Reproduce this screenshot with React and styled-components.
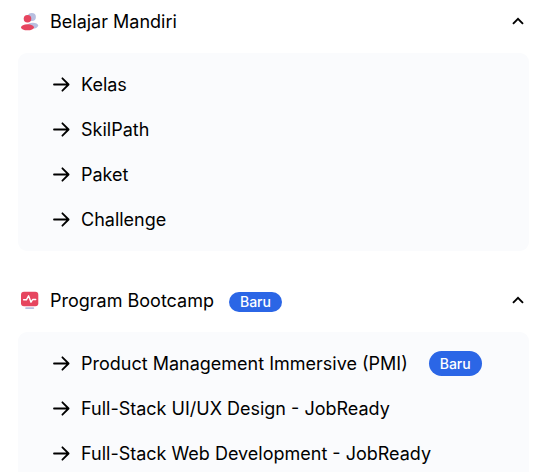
import React, { useState } from "react";
import styled, { createGlobalStyle } from "styled-components";

const GlobalStyle = createGlobalStyle`
  *, *::before, *::after { box-sizing: border-box; }
  body {
    margin: 0;
    background: #ffffff;
    color: #000000;
    font-family: Inter, "Liberation Sans", sans-serif;
    font-size: 18px;
    line-height: 27px;
  }
`;

const Menu = styled.nav`
  display: flex;
  flex-direction: column;
  gap: 28px;
  max-height: 100vh;
  overflow: hidden;
  padding: 0 8px 0 18px;
`;

const Section = styled.section`
  display: flex;
  flex-direction: column;
  flex-shrink: 0;
  gap: 11px;
`;

const SectionToggle = styled.button`
  display: flex;
  align-items: center;
  width: 100%;
  height: 42px;
  padding: 0 4px 0 2px;
  border: 0;
  background: none;
  color: inherit;
  font: inherit;
  text-align: left;
  cursor: pointer;

  & > svg { flex-shrink: 0; }
`;

const SectionTitle = styled.span`
  display: flex;
  align-items: baseline;
  margin-left: 10px;
`;

const Chevron = styled.svg`
  margin-left: auto;
  transform: ${({ $open }) => ($open ? "none" : "rotate(180deg)")};
`;

const Panel = styled.ul`
  margin: 0;
  padding: 9px 32px;
  border-radius: 9px;
  background: #fafbfd;
  list-style: none;
`;

const ItemLink = styled.a`
  display: flex;
  align-items: center;
  height: 45px;
  color: inherit;
  text-decoration: none;
  white-space: nowrap;

  & > svg { flex-shrink: 0; margin-right: 9px; }
`;

const Badge = styled.span`
  flex-shrink: 0;
  margin-left: ${({ $large }) => ($large ? "21px" : "15px")};
  padding: 0 11px;
  border-radius: 13px;
  background: #2b66e6;
  color: #ffffff;
  font-size: 14px;
  font-weight: 500;
  line-height: ${({ $large }) => ($large ? "25px" : "20px")};
`;

const PeopleIcon = () => (
  <svg width="20" height="20" viewBox="0 0 20 20" aria-hidden="true">
    <circle cx="11.8" cy="6" r="4.1" fill="#b8bfe0" />
    <ellipse cx="12.8" cy="14.6" rx="5.4" ry="2.9" fill="#b8bfe0" />
    <circle cx="7.5" cy="7.7" r="3.8" fill="#e6455f" />
    <ellipse cx="7.5" cy="16.3" rx="6.5" ry="3" fill="#e6455f" />
  </svg>
);

const MonitorIcon = () => (
  <svg width="20" height="20" viewBox="0 0 20 20" aria-hidden="true">
    <rect x="1" y="1.8" width="17.3" height="14.4" rx="3" fill="#e6455f" />
    <path
      d="M3.6 9.8h2.8l2.2-4 2.4 6.4 1.7-2.7h3"
      fill="none"
      stroke="#ffffff"
      strokeWidth="1.4"
      strokeLinecap="round"
      strokeLinejoin="round"
    />
    <rect x="5.2" y="17.3" width="9" height="1.7" rx="0.8" fill="#b8bfe0" />
  </svg>
);

const ChevronIcon = ({ open }) => (
  <Chevron $open={open} width="14" height="14" viewBox="0 0 14 14" aria-hidden="true">
    <path d="M2 9.9 7 4.8l5 5.1" fill="none" stroke="#000000" strokeWidth="1.9" />
  </Chevron>
);

const ArrowIcon = () => (
  <svg width="22" height="18" viewBox="0 0 22 18" aria-hidden="true">
    <path
      d="M4 8.5h14.5M12.4 2.3l6.2 6.2-6.2 6.2"
      fill="none"
      stroke="#000000"
      strokeWidth="1.8"
      strokeLinecap="round"
      strokeLinejoin="round"
    />
  </svg>
);

const sections = [
  {
    id: "mandiri",
    title: "Belajar Mandiri",
    Icon: PeopleIcon,
    items: [
      { label: "Kelas" },
      { label: "SkilPath" },
      { label: "Paket" },
      { label: "Challenge" },
    ],
  },
  {
    id: "bootcamp",
    title: "Program Bootcamp",
    Icon: MonitorIcon,
    badge: "Baru",
    items: [
      { label: "Product Management Immersive (PMI)", badge: "Baru" },
      { label: "Full-Stack UI/UX Design - JobReady" },
      { label: "Full-Stack Web Development - JobReady" },
    ],
  },
];

function MenuSection({ id, title, Icon, badge, items }) {
  const [open, setOpen] = useState(true);
  return (
    <Section>
      <SectionToggle
        type="button"
        aria-expanded={open}
        aria-controls={id}
        onClick={() => setOpen(!open)}
      >
        <Icon />
        <SectionTitle>
          {title}
          {badge && <Badge>{badge}</Badge>}
        </SectionTitle>
        <ChevronIcon open={open} />
      </SectionToggle>
      <Panel id={id} hidden={!open}>
        {items.map((item) => (
          <li key={item.label}>
            <ItemLink href="#">
              <ArrowIcon />
              <span>{item.label}</span>
              {item.badge && <Badge $large>{item.badge}</Badge>}
            </ItemLink>
          </li>
        ))}
      </Panel>
    </Section>
  );
}

export default function App() {
  return (
    <>
      <GlobalStyle />
      <Menu aria-label="Program">
        {sections.map((section) => (
          <MenuSection key={section.id} {...section} />
        ))}
      </Menu>
    </>
  );
}
